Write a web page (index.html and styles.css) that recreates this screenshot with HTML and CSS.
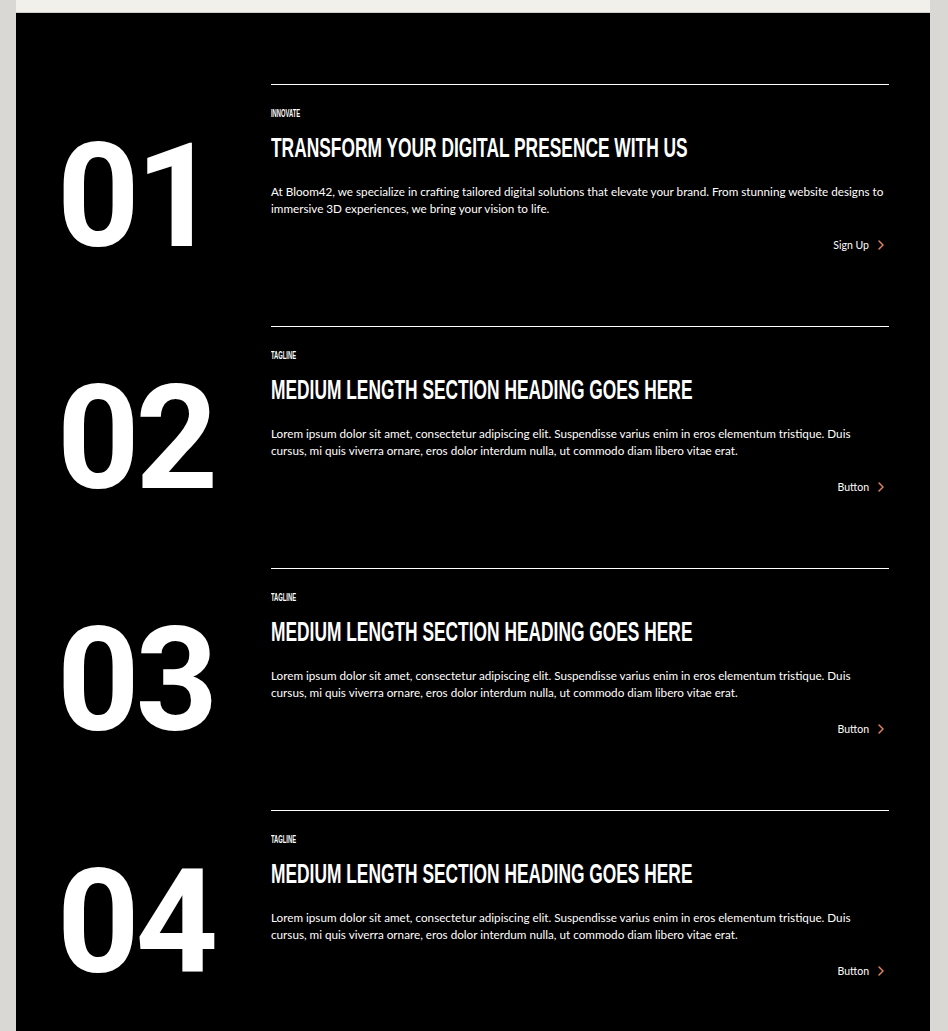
FILE: index.html
```html
<!DOCTYPE html>
<html lang="en">
<head>
<meta charset="utf-8">
<title>Features</title>
<link rel="stylesheet" href="styles.css">
</head>
<body>
<div class="page">
  <div class="top-strip"></div>
  <section class="list">
    <div class="row">
      <div class="num">01</div>
      <div class="content">
        <div class="tagline"><span>INNOVATE</span></div>
        <h2 class="heading"><span>TRANSFORM YOUR DIGITAL PRESENCE WITH US</span></h2>
        <p class="text">At Bloom42, we specialize in crafting tailored digital solutions that elevate your brand. From stunning website designs to immersive 3D experiences, we bring your vision to life.</p>
        <div class="actions"><a class="btn">Sign Up<svg class="chev" viewBox="0 0 16 16" width="16" height="16"><path d="M6 4l4 4-4 4" fill="none" stroke="currentColor" stroke-width="1.5" stroke-linecap="round" stroke-linejoin="round"/></svg></a></div>
      </div>
    </div>
    <div class="row">
      <div class="num">02</div>
      <div class="content">
        <div class="tagline"><span>TAGLINE</span></div>
        <h2 class="heading"><span>MEDIUM LENGTH SECTION HEADING GOES HERE</span></h2>
        <p class="text">Lorem ipsum dolor sit amet, consectetur adipiscing elit. Suspendisse varius enim in eros elementum tristique. Duis cursus, mi quis viverra ornare, eros dolor interdum nulla, ut commodo diam libero vitae erat.</p>
        <div class="actions"><a class="btn">Button<svg class="chev" viewBox="0 0 16 16" width="16" height="16"><path d="M6 4l4 4-4 4" fill="none" stroke="currentColor" stroke-width="1.5" stroke-linecap="round" stroke-linejoin="round"/></svg></a></div>
      </div>
    </div>
    <div class="row">
      <div class="num">03</div>
      <div class="content">
        <div class="tagline"><span>TAGLINE</span></div>
        <h2 class="heading"><span>MEDIUM LENGTH SECTION HEADING GOES HERE</span></h2>
        <p class="text">Lorem ipsum dolor sit amet, consectetur adipiscing elit. Suspendisse varius enim in eros elementum tristique. Duis cursus, mi quis viverra ornare, eros dolor interdum nulla, ut commodo diam libero vitae erat.</p>
        <div class="actions"><a class="btn">Button<svg class="chev" viewBox="0 0 16 16" width="16" height="16"><path d="M6 4l4 4-4 4" fill="none" stroke="currentColor" stroke-width="1.5" stroke-linecap="round" stroke-linejoin="round"/></svg></a></div>
      </div>
    </div>
    <div class="row">
      <div class="num">04</div>
      <div class="content">
        <div class="tagline"><span>TAGLINE</span></div>
        <h2 class="heading"><span>MEDIUM LENGTH SECTION HEADING GOES HERE</span></h2>
        <p class="text">Lorem ipsum dolor sit amet, consectetur adipiscing elit. Suspendisse varius enim in eros elementum tristique. Duis cursus, mi quis viverra ornare, eros dolor interdum nulla, ut commodo diam libero vitae erat.</p>
        <div class="actions"><a class="btn">Button<svg class="chev" viewBox="0 0 16 16" width="16" height="16"><path d="M6 4l4 4-4 4" fill="none" stroke="currentColor" stroke-width="1.5" stroke-linecap="round" stroke-linejoin="round"/></svg></a></div>
      </div>
    </div>
  </section>
</div>
</body>
</html>
```
FILE: styles.css
```css
* { box-sizing: border-box; }
html, body { margin: 0; padding: 0; }
body {
  background: #d9d8d4;
  font-family: Lato, "Liberation Sans", sans-serif;
  color: #fff;
}
.page {
  margin: 0 18px 0 16px;
}
.top-strip {
  height: 13px;
  background: #f1f0ea;
  border-bottom: 1px solid #cfcec9;
}
.list {
  background: #000;
  padding: 71px 41px 80px 41px;
  display: flex;
  flex-direction: column;
  gap: 57px;
}
.row {
  display: grid;
  grid-template-columns: 214px minmax(0, 1fr);
  align-items: start;
}
.num {
  font-family: Roboto, "Liberation Sans", sans-serif;
  font-weight: 700;
  font-size: 144px;
  line-height: 144px;
  letter-spacing: -4px;
  margin-top: 41px;
  color: #fff;
}
.content {
  border-top: 1px solid #fff;
}
.tagline {
  margin-top: 23px;
  height: 12px;
  font-family: "Liberation Sans Narrow", "Liberation Sans", sans-serif;
  font-weight: 700;
  font-size: 10px;
  line-height: 12px;
}
.tagline span {
  display: inline-block;
  transform: scaleX(0.58);
  transform-origin: left center;
  white-space: nowrap;
}
.heading {
  margin: 11px 0 0;
  font-family: "Liberation Sans Narrow", "Liberation Sans", sans-serif;
  font-weight: 700;
  font-size: 28px;
  line-height: 34px;
  height: 34px;
}
.heading span {
  display: inline-block;
  transform: scaleX(0.62);
  transform-origin: left center;
  white-space: nowrap;
}
.text {
  margin: 18px 0 0;
  max-width: 616px;
  font-size: 11.7px;
  line-height: 16.8px;
}
.actions {
  margin-top: 20px;
  display: flex;
  justify-content: flex-end;
}
.btn {
  display: inline-flex;
  align-items: center;
  gap: 4px;
  font-size: 10.5px;
  line-height: 16.8px;
  color: #fff;
}
.chev {
  color: #e2805f;
  display: block;
}
```
